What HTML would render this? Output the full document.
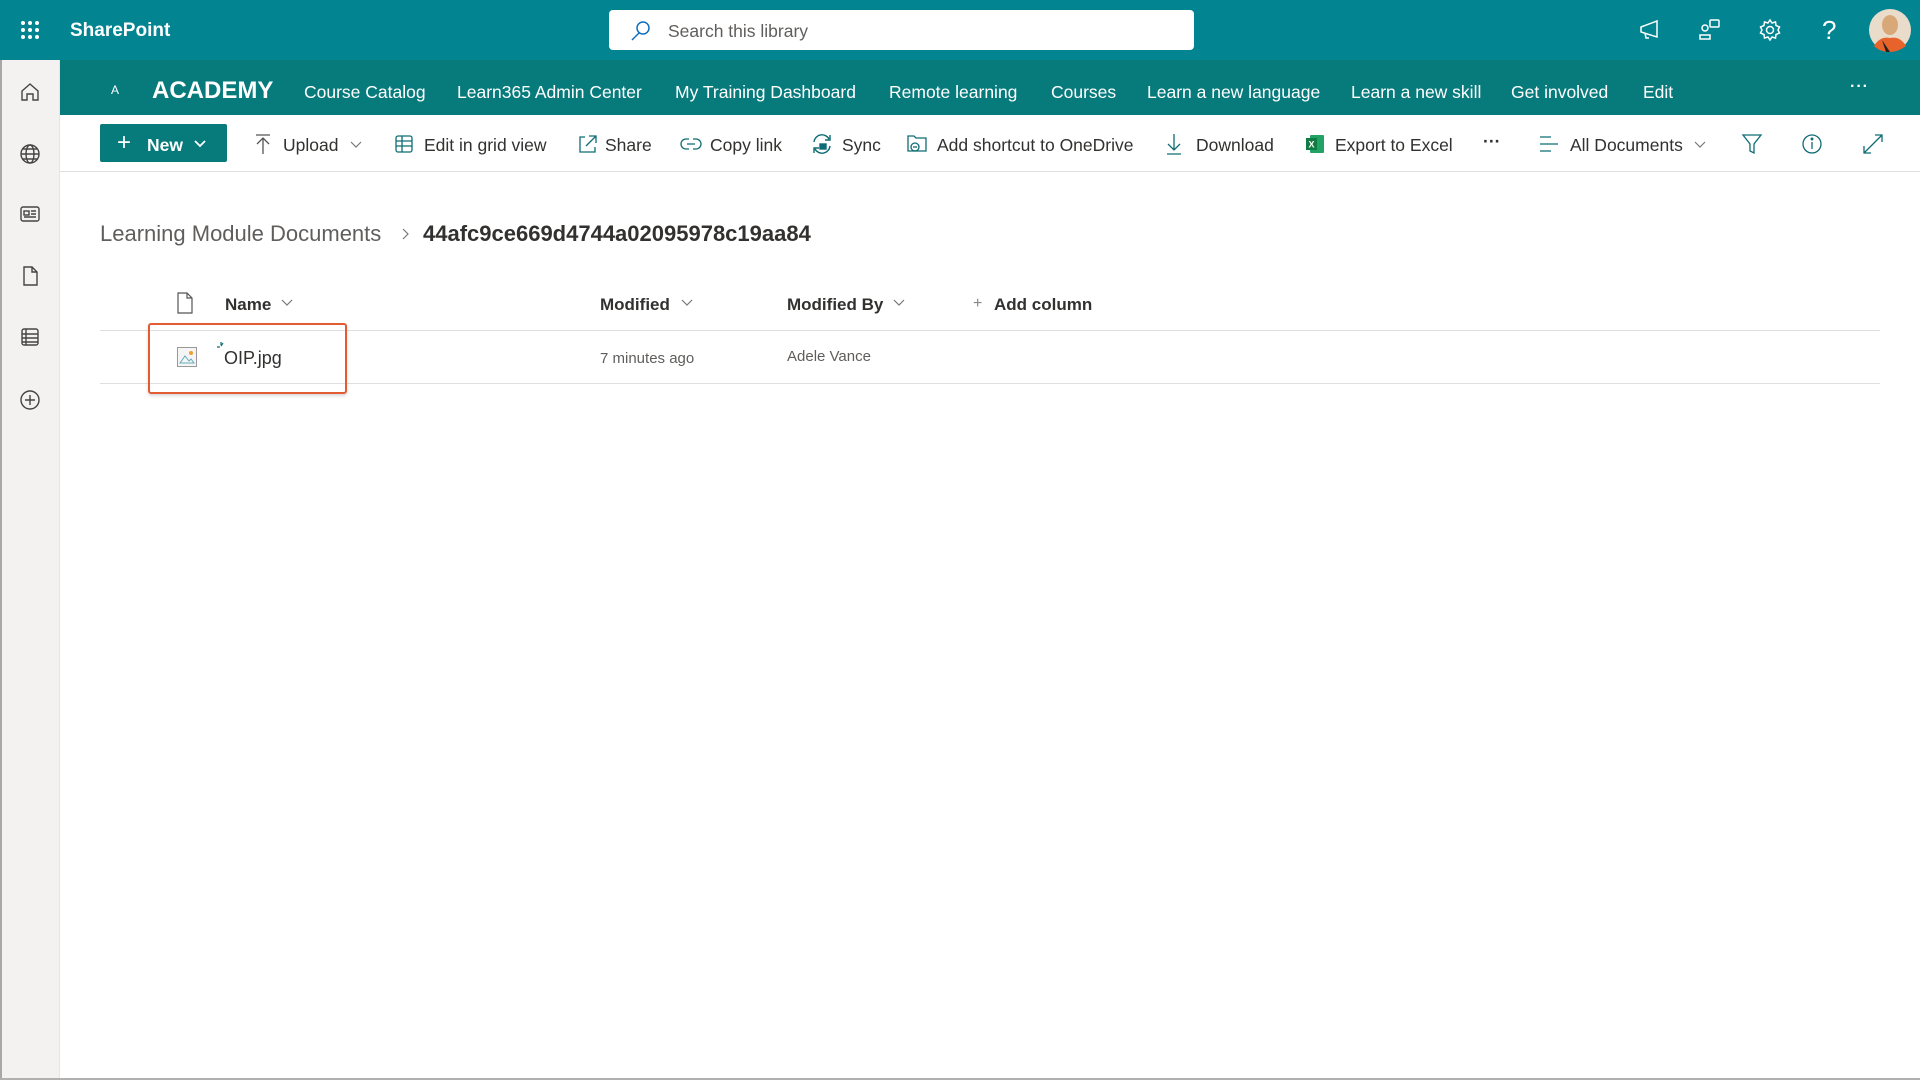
<!DOCTYPE html>
<html><head><meta charset="utf-8"><style>
*{margin:0;padding:0;box-sizing:border-box}
body{width:1920px;height:1080px;overflow:hidden;font-family:"Liberation Sans",Arial,sans-serif;background:#fff;position:relative;color:#323130}
.abs{position:absolute;white-space:nowrap}
#top{position:absolute;left:0;top:0;width:1920px;height:60px;background:#038491}
#side{position:absolute;left:0;top:60px;width:60px;height:1020px;background:#f3f2f1;border-right:1px solid #e6e5e3;border-left:2px solid #a8a8a8}
#hub{position:absolute;left:60px;top:60px;width:1860px;height:55px;background:#077a7c}
#cmd{position:absolute;left:60px;top:115px;width:1860px;height:57px;border-bottom:1px solid #e1dfdd}
.hl{top:82px;font-size:17.5px;color:#fff}
.ct{top:135px;font-size:17.5px;color:#323130}
svg{position:absolute}
</style></head><body>
<div id="top"></div>
<svg style="left:20px;top:20px" width="20" height="20" viewBox="0 0 20 20" fill="#fff"><circle cx="3" cy="3" r="2"/><circle cx="10" cy="3" r="2"/><circle cx="17" cy="3" r="2"/><circle cx="3" cy="10" r="2"/><circle cx="10" cy="10" r="2"/><circle cx="17" cy="10" r="2"/><circle cx="3" cy="17" r="2"/><circle cx="10" cy="17" r="2"/><circle cx="17" cy="17" r="2"/></svg>
<div class="abs" style="left:70px;top:20px;font-size:19px;font-weight:bold;color:#fff">SharePoint</div>
<div class="abs" style="left:609px;top:10px;width:585px;height:40px;background:#fff;border-radius:4px"></div>
<svg style="left:630px;top:20px" width="22" height="22" viewBox="0 0 22 22" fill="none" stroke="#106ebe" stroke-width="1.5"><circle cx="13" cy="8" r="6"/><path d="M9 13L2 20"/></svg>
<div class="abs" style="left:668px;top:21px;font-size:17.5px;color:#605e5c">Search this library</div>
<svg style="left:1638px;top:18px" width="24" height="24" viewBox="0 0 24 24" fill="none" stroke="#fff" stroke-width="1.5"><path d="M3 9L19 3V19L3 14Z M7 15L8 20H11"/></svg>
<svg style="left:1698px;top:18px" width="24" height="24" viewBox="0 0 24 24" fill="none" stroke="#fff" stroke-width="1.5"><rect x="12" y="2" width="9" height="7" rx="1"/><circle cx="7" cy="10" r="3"/><path d="M2 21V17H12V21Z"/></svg>
<svg style="left:1758px;top:18px" width="24" height="24" viewBox="0 0 24 24" fill="none" stroke="#fff" stroke-width="1.5"><circle cx="12" cy="12" r="3.5"/><path d="M12 2L14 5 17.5 4 18 7.5 21.5 9 20 12 21.5 15 18 16.5 17.5 20 14 19 12 22 10 19 6.5 20 6 16.5 2.5 15 4 12 2.5 9 6 7.5 6.5 4 10 5Z"/></svg>
<div class="abs" style="left:1822px;top:15px;font-size:26px;color:#fff">?</div>
<svg style="left:1868px;top:8px" width="44" height="44" viewBox="0 0 44 44"><circle cx="22" cy="22" r="21" fill="#e9dccb"/><ellipse cx="22" cy="17" rx="8" ry="10" fill="#d9a878"/><path d="M6 38Q12 28 22 30Q32 28 38 38Q30 44 22 44Q12 44 6 38Z" fill="#e8632b"/><path d="M14 32L22 44L18 44Z" fill="#222"/></svg>

<div id="side"></div>
<svg style="left:18px;top:80px" width="24" height="24" viewBox="0 0 24 24" fill="none" stroke="#444" stroke-width="1.4"><path d="M4 11L12 4 20 11V20H15V14H9V20H4Z"/></svg>
<svg style="left:18px;top:142px" width="24" height="24" viewBox="0 0 24 24" fill="none" stroke="#444" stroke-width="1.4"><circle cx="12" cy="12" r="9"/><ellipse cx="12" cy="12" rx="4" ry="9"/><path d="M3 12H21M5 7H19M5 17H19"/></svg>
<svg style="left:18px;top:202px" width="24" height="24" viewBox="0 0 24 24" fill="none" stroke="#444" stroke-width="1.4"><rect x="3" y="5" width="18" height="14" rx="2"/><rect x="6" y="9" width="5" height="4"/><path d="M13 9H18M13 12H18M6 15H18"/></svg>
<svg style="left:18px;top:264px" width="24" height="24" viewBox="0 0 24 24" fill="none" stroke="#444" stroke-width="1.4"><path d="M6 3H14L19 8V21H6Z M14 3V8H19"/></svg>
<svg style="left:18px;top:325px" width="24" height="24" viewBox="0 0 24 24" fill="none" stroke="#444" stroke-width="1.4"><rect x="4" y="4" width="16" height="16" rx="2"/><path d="M4 9H20M4 13H20M4 17H20M8 4V20"/></svg>
<svg style="left:18px;top:388px" width="24" height="24" viewBox="0 0 24 24" fill="none" stroke="#444" stroke-width="1.4"><circle cx="12" cy="12" r="9"/><path d="M12 7V17M7 12H17"/></svg>
<div class="abs" style="left:0;top:1078px;width:1920px;height:2px;background:#b0b0b0"></div>

<div id="hub"></div>
<div class="abs" style="left:111px;top:83px;font-size:12px;color:#fff">A</div>
<div class="abs" style="left:152px;top:77px;font-size:24px;font-weight:bold;color:#fff">ACADEMY</div>
<div class="abs hl" style="left:304px">Course Catalog</div>
<div class="abs hl" style="left:457px">Learn365 Admin Center</div>
<div class="abs hl" style="left:675px">My Training Dashboard</div>
<div class="abs hl" style="left:889px">Remote learning</div>
<div class="abs hl" style="left:1051px">Courses</div>
<div class="abs hl" style="left:1147px">Learn a new language</div>
<div class="abs hl" style="left:1351px">Learn a new skill</div>
<div class="abs hl" style="left:1511px">Get involved</div>
<div class="abs hl" style="left:1643px">Edit</div>
<div class="abs" style="left:1850px;top:78px;font-size:16px;color:#fff;font-weight:bold;letter-spacing:1px">···</div>

<div id="cmd"></div>
<div class="abs" style="left:100px;top:124px;width:127px;height:38px;background:#077a7c;border-radius:2px"></div>
<div class="abs" style="left:117px;top:129px;font-size:24px;color:#fff">+</div>
<div class="abs" style="left:147px;top:135px;font-size:17.5px;font-weight:bold;color:#fff">New</div>
<svg style="left:193px;top:139px" width="14" height="10" viewBox="0 0 14 10" fill="none" stroke="#fff" stroke-width="1.8"><path d="M2 2L7 7 12 2"/></svg>
<svg style="left:253px;top:133px" width="20" height="22" viewBox="0 0 20 22" fill="none" stroke="#555" stroke-width="1.3"><path d="M3 2H17M10 5V21M4 11L10 5 16 11"/></svg>
<div class="abs ct" style="left:283px">Upload</div>
<svg style="left:350px;top:141px" width="12" height="8" viewBox="0 0 12 8" fill="none" stroke="#777" stroke-width="1.2"><path d="M1 1L6 6 11 1"/></svg>
<svg style="left:394px;top:134px" width="20" height="20" viewBox="0 0 20 20" fill="none" stroke="#0f6c74" stroke-width="1.3"><rect x="2" y="2" width="16" height="16" rx="2"/><path d="M2 7H18M2 12H18M8 2V18"/></svg>
<div class="abs ct" style="left:424px">Edit in grid view</div>
<svg style="left:577px;top:133px" width="22" height="22" viewBox="0 0 22 22" fill="none" stroke="#0f6c74" stroke-width="1.3"><path d="M8 4H3V19H18V14M12 3H19V10M19 3L9 13"/></svg>
<div class="abs ct" style="left:605px">Share</div>
<svg style="left:680px;top:136px" width="22" height="16" viewBox="0 0 22 16" fill="none" stroke="#0f6c74" stroke-width="1.3"><path d="M9 3H6A5 5 0 0 0 6 13H9M13 3H16A5 5 0 0 1 16 13H13M7 8H15"/></svg>
<div class="abs ct" style="left:710px">Copy link</div>
<svg style="left:810px;top:133px" width="24" height="22" viewBox="0 0 24 22" fill="none" stroke="#0f6c74" stroke-width="1.4"><path d="M4 9A8 8 0 0 1 19 6M20 2V7H15M20 13A8 8 0 0 1 5 16M4 20V15H9"/><rect x="10" y="11" width="6" height="5" fill="#0f6c74"/></svg>
<div class="abs ct" style="left:842px">Sync</div>
<svg style="left:906px;top:133px" width="22" height="22" viewBox="0 0 22 22" fill="none" stroke="#0f6c74" stroke-width="1.3"><path d="M2 3H8L10 5H20V18H2Z"/><circle cx="9" cy="14" r="4"/><path d="M7 14H11"/></svg>
<div class="abs ct" style="left:937px">Add shortcut to OneDrive</div>
<svg style="left:1164px;top:132px" width="20" height="24" viewBox="0 0 20 24" fill="none" stroke="#0f6c74" stroke-width="1.3"><path d="M10 2V18M4 12L10 18 16 12M3 22H17"/></svg>
<div class="abs ct" style="left:1196px">Download</div>
<svg style="left:1305px;top:134px" width="20" height="20" viewBox="0 0 20 20"><rect x="5" y="1" width="14" height="18" rx="1" fill="#21a366"/><rect x="1" y="4" width="11" height="12" fill="#107c41"/><text x="3.5" y="13.5" font-size="9" font-family="Liberation Sans" fill="#fff" font-weight="bold">X</text></svg>
<div class="abs ct" style="left:1335px">Export to Excel</div>
<div class="abs ct" style="left:1483px;font-weight:bold;top:131px">···</div>
<svg style="left:1538px;top:134px" width="22" height="20" viewBox="0 0 22 20" fill="none" stroke="#0f6c74" stroke-width="1.3"><path d="M2 3H13M2 10H20M2 17H13"/></svg>
<div class="abs ct" style="left:1570px">All Documents</div>
<svg style="left:1694px;top:141px" width="12" height="8" viewBox="0 0 12 8" fill="none" stroke="#777" stroke-width="1.2"><path d="M1 1L6 6 11 1"/></svg>
<svg style="left:1741px;top:133px" width="22" height="22" viewBox="0 0 22 22" fill="none" stroke="#0f6c74" stroke-width="1.3"><path d="M2 2H20L13 11V20L9 18V11Z"/></svg>
<svg style="left:1801px;top:133px" width="22" height="22" viewBox="0 0 22 22" fill="none" stroke="#0f6c74" stroke-width="1.3"><circle cx="11" cy="11" r="9"/><path d="M11 9V16"/><circle cx="11" cy="6" r="0.8" fill="#0f6c74"/></svg>
<svg style="left:1862px;top:133px" width="22" height="22" viewBox="0 0 22 22" fill="none" stroke="#0f6c74" stroke-width="1.3"><path d="M20 2L2 20M13 2H20V9M2 13V20H9"/></svg>

<div class="abs" style="left:100px;top:221px;font-size:22px;color:#605e5c">Learning Module Documents</div>
<svg style="left:400px;top:227px" width="10" height="14" viewBox="0 0 10 14" fill="none" stroke="#777" stroke-width="1.2"><path d="M3 2L8 7 3 12"/></svg>
<div class="abs" style="left:423px;top:221px;font-size:22px;font-weight:bold;color:#323130">44afc9ce669d4744a02095978c19aa84</div>

<svg style="left:176px;top:292px" width="18" height="22" viewBox="0 0 18 22" fill="none" stroke="#555" stroke-width="1.2"><path d="M2 1H11L16 6V21H2Z M11 1V6H16"/></svg>
<div class="abs" style="left:225px;top:295px;font-size:17px;font-weight:bold;color:#323130">Name</div>
<svg style="left:281px;top:299px" width="12" height="8" viewBox="0 0 12 8" fill="none" stroke="#777" stroke-width="1.2"><path d="M1 1L6 6 11 1"/></svg>
<div class="abs" style="left:600px;top:295px;font-size:17px;font-weight:bold;color:#323130">Modified</div>
<svg style="left:681px;top:299px" width="12" height="8" viewBox="0 0 12 8" fill="none" stroke="#777" stroke-width="1.2"><path d="M1 1L6 6 11 1"/></svg>
<div class="abs" style="left:787px;top:295px;font-size:17px;font-weight:bold;color:#323130">Modified By</div>
<svg style="left:893px;top:299px" width="12" height="8" viewBox="0 0 12 8" fill="none" stroke="#777" stroke-width="1.2"><path d="M1 1L6 6 11 1"/></svg>
<div class="abs" style="left:973px;top:295px;font-size:16px;color:#888">+</div>
<div class="abs" style="left:994px;top:295px;font-size:17px;font-weight:bold;color:#323130">Add column</div>
<div class="abs" style="left:100px;top:330px;width:1780px;height:1px;background:#e1dfdd"></div>

<svg style="left:176px;top:346px" width="22" height="22" viewBox="0 0 22 22"><rect x="1.5" y="1.5" width="19" height="19" fill="#f5f5f5" stroke="#999"/><circle cx="15" cy="7" r="2" fill="#f0a030"/><path d="M4 17L9 10 13 15 15 13 18 17Z" fill="none" stroke="#6ab" stroke-width="1"/></svg>
<svg style="left:216px;top:341px" width="10" height="10" viewBox="0 0 10 10" fill="none" stroke="#0f6c74" stroke-width="1.2"><path d="M1 6H4M5 1V4M7 2L5 5"/></svg>
<div class="abs" style="left:224px;top:348px;font-size:18px;color:#323130">OIP.jpg</div>
<div class="abs" style="left:600px;top:350px;font-size:15px;color:#605e5c">7 minutes ago</div>
<div class="abs" style="left:787px;top:348px;font-size:15px;color:#605e5c">Adele Vance</div>
<div class="abs" style="left:100px;top:383px;width:1780px;height:1px;background:#e1dfdd"></div>
<div class="abs" style="left:148px;top:323px;width:199px;height:71px;border:2.5px solid #e25b32;border-radius:3px;box-shadow:0 2px 3px rgba(0,0,0,.15)"></div>
</body></html>
